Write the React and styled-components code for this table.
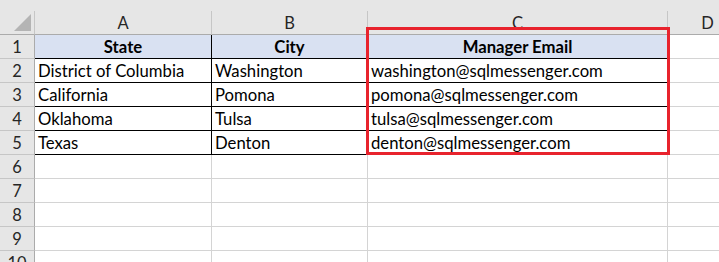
import React from 'react';
import styled, { createGlobalStyle } from 'styled-components';

const GlobalStyle = createGlobalStyle`
  html, body {
    margin: 0;
    padding: 0;
    background: #ffffff;
    overflow: hidden;
  }
`;

const Sheet = styled.div`
  position: relative;
  width: 719px;
  height: 262px;
  overflow: hidden;
  font-family: Lato, "Open Sans", sans-serif;
  color: #000;
`;

const TopStrip = styled.div`
  height: 11px;
  background: #e6e6e6;
`;

const Grid = styled.div`
  display: grid;
  grid-template-columns: 35px 177px 156px 300px 80px;
  grid-auto-rows: 24px;
  width: 748px;
`;

const Corner = styled.div`
  box-sizing: border-box;
  background: #e6e6e6;
  border-right: 1px solid #c6c6c6;
  border-bottom: 1px solid #ababab;
  display: flex;
  align-items: flex-end;
  justify-content: flex-end;
  padding: 0 3px 3px 0;
`;

const Triangle = styled.div`
  width: 0;
  height: 0;
  border-left: 17px solid transparent;
  border-bottom: 17px solid #b4b4b4;
`;

const ColHeader = styled.div`
  box-sizing: border-box;
  background: #e6e6e6;
  border-right: 1px solid #c6c6c6;
  border-bottom: 1px solid #ababab;
  display: flex;
  align-items: center;
  justify-content: center;
  font-size: 16.5px;
  color: #262626;
  padding-top: 1px;
`;

const RowHeader = styled.div`
  box-sizing: border-box;
  background: #e6e6e6;
  border-right: 1px solid #ababab;
  border-bottom: 1px solid #c6c6c6;
  display: flex;
  align-items: center;
  justify-content: center;
  font-size: 16.5px;
  color: #262626;
`;

const Cell = styled.div`
  box-sizing: border-box;
  border-right: 1px solid ${(p) => (p.$ruled ? '#000' : '#d4d4d4')};
  border-bottom: 1px solid ${(p) => (p.$ruled ? '#000' : '#d4d4d4')};
  background: ${(p) => (p.$head ? '#d9e1f2' : '#fff')};
  display: flex;
  align-items: center;
  justify-content: ${(p) => (p.$head ? 'center' : 'flex-start')};
  padding: 1px 3px 0 3px;
  font-size: 16.7px;
  font-weight: ${(p) => (p.$head ? 700 : 400)};
  white-space: nowrap;
  overflow: hidden;
`;

const Highlight = styled.div`
  position: absolute;
  left: 366px;
  top: 27px;
  width: 304px;
  height: 128px;
  box-sizing: border-box;
  border: 3px solid #e8232d;
  pointer-events: none;
`;

const columns = ['A', 'B', 'C', 'D'];

const header = ['State', 'City', 'Manager Email'];

const rows = [
  ['District of Columbia', 'Washington', 'washington@sqlmessenger.com'],
  ['California', 'Pomona', 'pomona@sqlmessenger.com'],
  ['Oklahoma', 'Tulsa', 'tulsa@sqlmessenger.com'],
  ['Texas', 'Denton', 'denton@sqlmessenger.com'],
];

const App = () => {
  const body = [header, ...rows];
  const sheetRows = Array.from({ length: 10 }, (_, i) => i + 1);

  return (
    <Sheet>
      <GlobalStyle />
      <TopStrip />
      <Grid>
        <Corner>
          <Triangle />
        </Corner>
        {columns.map((c) => (
          <ColHeader key={c}>{c}</ColHeader>
        ))}
        {sheetRows.map((r) => {
          const data = body[r - 1];
          return (
            <React.Fragment key={r}>
              <RowHeader>{r}</RowHeader>
              {[0, 1, 2].map((ci) => (
                <Cell key={ci} $ruled={!!data} $head={r === 1}>
                  {data ? data[ci] : ''}
                </Cell>
              ))}
              <Cell />
            </React.Fragment>
          );
        })}
      </Grid>
      <Highlight />
    </Sheet>
  );
};

export default App;
